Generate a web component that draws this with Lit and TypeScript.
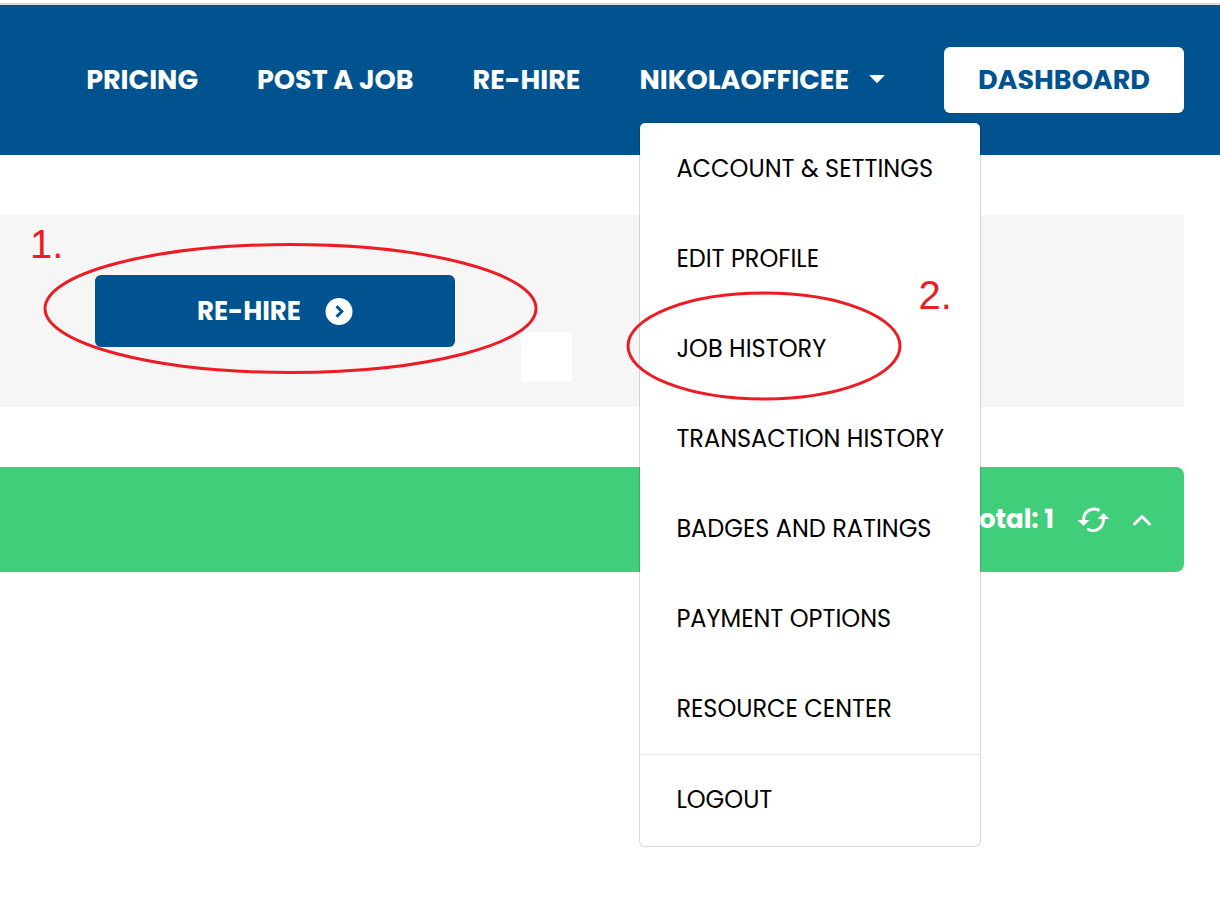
import { LitElement, html, css } from "lit";
import { customElement, state } from "lit/decorators.js";

const menuItems = [
  "Account & Settings",
  "Edit Profile",
  "Job History",
  "Transaction History",
  "Badges and Ratings",
  "Payment Options",
  "Resource Center",
];

@customElement("app-root")
export class AppRoot extends LitElement {
  @state() private menuOpen = true;

  static styles = css`
    :host {
      display: block;
      min-height: 100vh;
      background: #fff;
      font-family: Poppins, Inter, sans-serif;
      font-size: 26px;
      line-height: 32px;
      font-weight: 700;
      color: #000;
      overflow-x: hidden;
    }
    * {
      box-sizing: border-box;
    }
    a {
      color: inherit;
      text-decoration: none;
    }
    button {
      font: inherit;
      color: inherit;
      background: none;
      border: 0;
      padding: 0;
      cursor: pointer;
      text-transform: inherit;
    }
    svg {
      display: block;
      flex: none;
    }
    .top {
      margin-top: 3px;
      border-top: 2px solid #dcdcdc;
      background: #00538f;
      height: 152px;
      padding: 0 36px;
      display: flex;
      align-items: center;
      color: #fff;
      font-size: 27px;
      text-transform: uppercase;
    }
    .nav {
      flex: 1;
      display: flex;
      justify-content: flex-end;
      align-items: center;
      gap: 59px;
      white-space: nowrap;
    }
    .account {
      position: relative;
    }
    .toggle {
      display: flex;
      align-items: center;
      gap: 20px;
    }
    .dashboard {
      width: 240px;
      height: 66px;
      display: flex;
      align-items: center;
      justify-content: center;
      border-radius: 6px;
      background: #fff;
      color: #00538f;
    }
    .menu {
      position: absolute;
      z-index: 2;
      top: 58px;
      left: 0;
      min-width: 342px;
      margin: 0;
      padding: 1px 0;
      list-style: none;
      background: #fff;
      background-clip: padding-box;
      border: 1px solid rgba(0, 0, 0, 0.15);
      border-radius: 6px;
      color: #000;
      font-size: 24px;
      font-weight: 400;
    }
    .item {
      position: relative;
    }
    .link {
      display: flex;
      align-items: center;
      height: 90px;
      padding: 0 36px;
    }
    .last {
      border-top: 1px solid #e9ecef;
    }
    .ring {
      position: absolute;
      fill: none;
      stroke: #ed1c24;
      stroke-width: 3;
      pointer-events: none;
    }
    .step {
      position: absolute;
      font-family: "Liberation Sans", sans-serif;
      font-size: 40px;
      line-height: 46px;
      font-weight: 400;
      color: #ed1c24;
    }
    .ring-menu {
      left: -14px;
      top: -13px;
    }
    .step-menu {
      left: 278px;
      top: -32px;
    }
    .content {
      padding: 60px 36px 0 0;
      display: grid;
      gap: 60px;
    }
    .panel {
      position: relative;
      padding: 60px 95px;
      background: #f6f6f6;
    }
    .rehire {
      width: 360px;
      height: 72px;
      display: flex;
      align-items: center;
      justify-content: center;
      gap: 24px;
      border-radius: 6px;
      background: #00538f;
      color: #fff;
      text-transform: uppercase;
    }
    .patch {
      position: absolute;
      left: 521px;
      top: 117px;
      width: 51px;
      height: 50px;
      background: #fff;
    }
    .ring-panel {
      left: 43px;
      top: 27px;
    }
    .step-panel {
      left: 30px;
      top: 6px;
    }
    .bar {
      height: 105px;
      padding: 0 32px;
      display: flex;
      align-items: center;
      justify-content: flex-end;
      gap: 22px;
      border-radius: 0 8px 8px 0;
      background: #40ce7b;
      color: #fff;
    }
    .total {
      padding-bottom: 2px;
    }
  `;

  private toggleMenu() {
    this.menuOpen = !this.menuOpen;
  }

  private renderMark() {
    return html`
      <svg class="ring ring-menu" width="276" height="110" aria-hidden="true">
        <ellipse cx="138" cy="55" rx="136" ry="53"></ellipse>
      </svg>
      <span class="step step-menu">2.</span>
    `;
  }

  private renderMenu() {
    return html`
      <ul class="menu">
        ${menuItems.map(
          (label) => html`
            <li class="item">
              <a class="link" href="#">${label}</a>
              ${label === "Job History" ? this.renderMark() : null}
            </li>
          `
        )}
        <li class="item last"><a class="link" href="#">Logout</a></li>
      </ul>
    `;
  }

  render() {
    return html`
      <header class="top">
        <nav class="nav">
          <a href="#">Pricing</a>
          <a href="#">Post a Job</a>
          <a href="#">Re-Hire</a>
          <div class="account">
            <button class="toggle" aria-expanded=${this.menuOpen} @click=${this.toggleMenu}>
              NikolaOfficee
              <svg width="16" height="12" viewBox="0 0 16 12" fill="#fff" aria-hidden="true">
                <path d="M1 1h14q1 0 .3 .8L8.7 8.400q-.7 .6-1.400 0L.7 1.800Q0 1 1 1z" />
              </svg>
            </button>
            ${this.menuOpen ? this.renderMenu() : null}
          </div>
          <a class="dashboard" href="#">Dashboard</a>
        </nav>
      </header>
      <main class="content">
        <section class="panel">
          <button class="rehire">
            Re-Hire
            <svg width="28" height="28" viewBox="0 0 28 28" aria-hidden="true">
              <circle cx="14" cy="14.500" r="13.500" fill="#fff" />
              <path d="M11.500 9.200l5.300 5.300-5.300 5.300" fill="none" stroke="#00538f" stroke-width="3" />
            </svg>
          </button>
          <div class="patch"></div>
          <svg class="ring ring-panel" width="496" height="134" aria-hidden="true">
            <ellipse cx="247.500" cy="66.500" rx="245.500" ry="64"></ellipse>
          </svg>
          <span class="step step-panel">1.</span>
        </section>
        <section class="bar">
          <span class="total">Total: 1</span>
          <button aria-label="Refresh">
            <svg width="34" height="28" viewBox="-1 0 34 28" fill="none" stroke="#fff" stroke-width="3" stroke-linecap="round">
              <path d="M6.500 14C6.500 6 14 .8 21.500 4" />
              <path d="M26.500 13C26.500 21 19.500 27.200 11.500 23.500" />
              <path d="M.5 14h12l-6 6zM20.500 13h12l-6-6z" fill="#fff" stroke="none" />
            </svg>
          </button>
          <button aria-label="Collapse">
            <svg width="20" height="14" viewBox="0 0 20 14" fill="none" stroke="#fff" stroke-width="3" stroke-linecap="round">
              <path d="M2.500 11L10 3.500l7.500 7.500" />
            </svg>
          </button>
        </section>
      </main>
    `;
  }
}
